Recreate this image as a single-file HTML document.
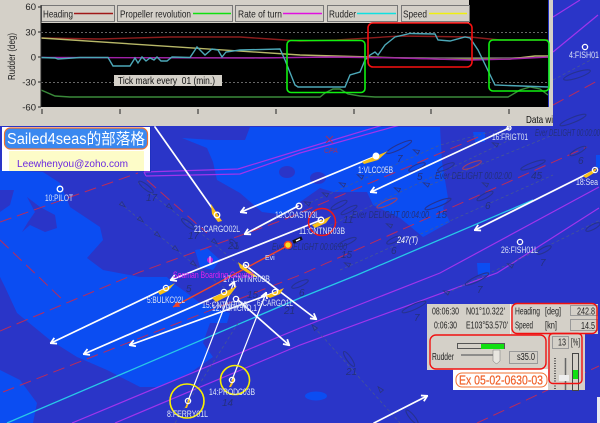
<!DOCTYPE html>
<html><head><meta charset="utf-8"><style>
html,body{margin:0;padding:0;width:600px;height:423px;overflow:hidden;background:#2a35c8}
svg{display:block;position:absolute;left:0;top:0}
text{font-family:"Liberation Sans","Noto Sans CJK TC",sans-serif}
</style></head><body>
<svg width="600" height="423" viewBox="0 0 600 423" xmlns="http://www.w3.org/2000/svg">
<defs>
<marker id="a" viewBox="0 0 10 10" refX="8.500" refY="5" markerWidth="8" markerHeight="8" markerUnits="userSpaceOnUse" orient="auto"><path d="M2 1L9 5L2 9" fill="none" stroke="#fff" stroke-width="2.200"/></marker>
<marker id="r" viewBox="0 0 10 10" refX="9" refY="5" markerWidth="8" markerHeight="8" markerUnits="userSpaceOnUse" orient="auto"><path d="M1 1L9 5L1 9Z" fill="#f04428"/></marker>
<path id="t" d="M-3-2L3 0L-3 2Z" fill="none" stroke="#2a3480" stroke-width=".8"/>
</defs>
<!-- map base -->
<rect width="600" height="423" fill="#2a35c8"/>
<g fill="#0b4df2">
<path d="M0 170L43 172L60 183L70 207L100 227L103 240L87 258L103 270L140 277L167 277L173 283L187 293L200 303L230 313L227 323L210 323L203 343L213 357L190 373L160 387L140 387L107 370L77 357L50 340L17 313L5 287L0 277Z"/>
<path d="M0 370L20 380L37 403L33 423L0 423Z"/>
<path d="M182 138L213 140L245 140L250 127L440 127L442 162L448 198L443 208L450 222L423 237L400 218L373 205L367 192L333 192L320 188L300 202L285 215L262 212L240 193L217 180L213 162L207 148Z"/>
<path d="M195 250L207 248L220 260L213 270L200 267Z"/>
<path d="M473 132L485 132L485 142L475 142Z"/>
<path d="M477 263L490 263L490 275L478 275Z"/>
<path d="M596 155L600 155V168H596Z"/>
<ellipse cx="316" cy="396" rx="11" ry="4.500"/>
</g>
<g fill="#2a35c8">
<path d="M0 190L14 190L10 205L0 212Z"/>
<path d="M27 197L40 207L55 215L57 228L45 232L30 225L22 232L28 222L35 212Z"/>
<ellipse cx="287" cy="172" rx="8" ry="6"/>
<ellipse cx="318" cy="178" rx="8" ry="6"/>
</g>
<!-- purple lines -->
<g fill="none" stroke="#a034ec" stroke-width="1.200">
<path d="M144 172L238 169L300 150L383 125"/><path d="M146 176L240 174L300 153L400 125"/>
<path d="M144 172L146 176"/>
<path d="M72 423L300 328L440 273L599 187"/><path d="M115 423L300 345L497 273L599 208"/>
<path d="M553 52L598 15"/><path d="M553 17L580 0"/>
</g>
<path d="M7 423L300 298L357 275L533 200" fill="none" stroke="#28c8e8" stroke-width="1.300"/>
<!-- red dashed -->
<g fill="none" stroke="#b82c5c" stroke-width="1" stroke-dasharray="12 6">
<path d="M3 392L300 275L587 147"/><path d="M0 331L140 272L283 220L483 135"/>
<path d="M0 222L138 173"/><path d="M147 180L207 233"/><path d="M0 240L65 302"/>
<path d="M477 423L599 366"/><path d="M553 105L599 80"/>
</g>
<!-- gray dashed tracks -->
<g fill="none" stroke="#4a5a90" stroke-width="0.700" stroke-dasharray="3 2.500">
<path d="M120 203L197 267L240 300"/><path d="M138 183L213 243L245 270"/><path d="M314 327L400 423"/>
<path d="M175 423L240 320"/><path d="M447 293L560 240L600 220"/>
<path d="M300 207L440 145L510 127"/><path d="M310 235L520 135"/><path d="M430 185L553 135"/>
<path d="M553 80L600 55"/><path d="M340 270L553 175"/>
</g>
<g>
<use href="#t" transform="translate(123 205) rotate(40)"/><use href="#t" transform="translate(141 220) rotate(40)"/><use href="#t" transform="translate(158 235) rotate(40)"/>
<use href="#t" transform="translate(176 249) rotate(40)"/><use href="#t" transform="translate(194 264) rotate(40)"/><use href="#t" transform="translate(170 207) rotate(40)"/>
<use href="#t" transform="translate(215 242) rotate(40)"/><use href="#t" transform="translate(307 203) rotate(205)"/><use href="#t" transform="translate(325 194) rotate(205)"/>
<use href="#t" transform="translate(342 184) rotate(205)"/><use href="#t" transform="translate(360 176) rotate(205)"/><use href="#t" transform="translate(416 151) rotate(205)"/>
<use href="#t" transform="translate(495 144) rotate(205)"/><use href="#t" transform="translate(397 189) rotate(205)"/><use href="#t" transform="translate(426 184) rotate(205)"/>
<use href="#t" transform="translate(485 184) rotate(205)"/><use href="#t" transform="translate(389 225) rotate(205)"/><use href="#t" transform="translate(347 264) rotate(205)"/>
<use href="#t" transform="translate(446 292) rotate(205)"/><use href="#t" transform="translate(510 265) rotate(205)"/><use href="#t" transform="translate(314 327) rotate(230)"/>
<use href="#t" transform="translate(380 389) rotate(230)"/>
</g>
<!-- ship outlines -->
<g fill="none" stroke="#263290" stroke-width="1.100">
<ellipse cx="399" cy="147" rx="14" ry="2.600" transform="rotate(-26 399 147)"/>
<ellipse cx="417" cy="167" rx="9" ry="2.400" transform="rotate(-24 417 167)"/>
<ellipse cx="446" cy="167" rx="9" ry="2.400" transform="rotate(-24 446 167)"/>
<ellipse cx="533" cy="165" rx="13" ry="2.500" transform="rotate(-20 533 165)"/>
<ellipse cx="578" cy="151" rx="9" ry="2.400" transform="rotate(-28 578 151)"/>
<ellipse cx="485" cy="196" rx="9" ry="2.400" transform="rotate(-28 485 196)"/>
<ellipse cx="438" cy="204" rx="14" ry="2.600" transform="rotate(-22 438 204)"/>
<ellipse cx="339" cy="205" rx="9" ry="2.400" transform="rotate(-28 339 205)"/>
<ellipse cx="349" cy="210" rx="9" ry="2.200" transform="rotate(-28 349 210)"/>
<ellipse cx="347" cy="242" rx="10" ry="2.400" transform="rotate(-24 347 242)"/>
<ellipse cx="394" cy="240" rx="8" ry="2.400" transform="rotate(-26 394 240)"/>
<ellipse cx="544" cy="250" rx="8" ry="2.400" transform="rotate(-28 544 250)"/>
<ellipse cx="414" cy="307" rx="13" ry="2.600" transform="rotate(-24 414 307)"/>
<ellipse cx="477" cy="279" rx="13" ry="2.600" transform="rotate(-26 477 279)"/>
<ellipse cx="300" cy="284" rx="9" ry="2.400" transform="rotate(-24 300 284)"/>
<ellipse cx="349" cy="359" rx="9" ry="2.400" transform="rotate(55 349 359)"/>
<ellipse cx="412" cy="417" rx="9" ry="2.400" transform="rotate(50 412 417)"/>
<ellipse cx="146" cy="187" rx="9" ry="2.400" transform="rotate(38 146 187)"/>
<ellipse cx="188" cy="224" rx="8" ry="2.400" transform="rotate(38 188 224)"/>
<ellipse cx="234" cy="244" rx="6" ry="2.200" transform="rotate(50 234 244)"/>
<ellipse cx="593" cy="227" rx="8" ry="2.400" transform="rotate(-28 593 227)"/>
<ellipse cx="577" cy="75" rx="14" ry="3" transform="rotate(-18 577 75)"/>
<ellipse cx="573" cy="120" rx="14" ry="2.600" transform="rotate(-22 573 120)"/>
</g>
<g fill="none" stroke="#a04060" stroke-width="1.100">
<ellipse cx="472" cy="165" rx="10" ry="2.400" transform="rotate(-22 472 165)"/>
<ellipse cx="387" cy="203" rx="11" ry="2.400" transform="rotate(-24 387 203)"/>
</g>
<path d="M326 136L333 143M333 136L326 143" stroke="#a03060"/>
<text x="324" y="153" font-size="7" fill="#a03060" font-style="italic">CPA</text>
<!-- dark italic numbers -->
<g fill="#24307c" font-size="10" font-style="italic">
<text x="146" y="201">17</text><text x="188" y="239">17</text><text x="228" y="249">21</text><text x="186" y="292">5</text>
<text x="247" y="298">15</text><text x="284" y="314">21</text><text x="346" y="375">21</text><text x="222" y="406">14</text>
<text x="414" y="321">7</text><text x="477" y="293">7</text><text x="540" y="266">7</text><text x="299" y="296">6</text>
<text x="391" y="254">6</text><text x="341" y="258">15</text><text x="436" y="218">15</text><text x="485" y="209">6</text>
<text x="417" y="180">5</text><text x="578" y="164">6</text><text x="531" y="179">45</text><text x="397" y="162">7</text><text x="343" y="223">11</text>
<text x="535" y="136" textLength="65" lengthAdjust="spacingAndGlyphs">Ever DELIGHT 00:00:00</text>
<text x="435" y="179" textLength="77" lengthAdjust="spacingAndGlyphs">Ever DELIGHT 00:02:00</text>
<text x="352" y="218" textLength="77" lengthAdjust="spacingAndGlyphs">Ever DELIGHT 00:04:00</text>
<text x="272" y="250" textLength="75" lengthAdjust="spacingAndGlyphs">Ever DELIGHT 00:06:00</text>
</g>
<text x="397" y="243" font-size="9" font-style="italic" fill="#fff" textLength="21" lengthAdjust="spacingAndGlyphs">247(T)</text>
<!-- white tracks -->
<g fill="none" stroke="#fff" stroke-width="1.700" stroke-linecap="round">
<path d="M155 127L217 215"/>
<path d="M376 156L241 212" marker-end="url(#a)"/>
<path d="M509 128L371 192" marker-end="url(#a)"/>
<path d="M298 206L245 234" marker-end="url(#a)"/>
<path d="M321 220L171 280" marker-end="url(#a)"/>
<path d="M595 170L475 230" marker-end="url(#a)"/>
<path d="M166 288L51 343" marker-end="url(#a)"/>
<path d="M224 293L84 354" marker-end="url(#a)"/>
<path d="M276 292L130 345" marker-end="url(#a)"/>
<path d="M188 401L234 282" stroke-width="1.200" marker-end="url(#a)"/>
<path d="M232 380L266 293" stroke-width="1.200" marker-end="url(#a)"/>
<path d="M238 300L289 345" marker-end="url(#a)"/>
<path d="M245 265L316 319" marker-end="url(#a)"/>
<path d="M374 423L427 396" marker-end="url(#a)"/>
</g>
<path d="M289 245L173 307" fill="none" stroke="#f04428" stroke-width="1.500" marker-end="url(#r)"/>
<!-- yellow ships -->
<g fill="#f8c018">
<path d="M362 162L388 151L378 160L364 164Z"/>
<path d="M211 204L222 221L218 222L212 214Z"/>
<path d="M238 262L258 277L254 277L240 268Z"/>
<path d="M158 292L175 283L168 291L160 295Z"/>
<path d="M212 298L237 286L230 295L216 302Z"/>
<path d="M266 296L284 288L280 294L270 298Z"/>
<path d="M312 225L331 216L326 223L315 228Z"/>
<path d="M583 176L598 167L594 173L586 178Z"/>
<path d="M185 408L189 398L190 400L187 408Z"/>
<path d="M229 387L234 376L235 380L231 387Z"/>
</g>
<circle cx="288" cy="245" r="3.500" fill="#f8e020" stroke="#f04428" stroke-width="1.500"/>
<path d="M293 242L302 238" stroke="#111" stroke-width="3.500"/><path d="M296 241L300 239" stroke="#fff" stroke-width="1.500"/>
<!-- circles -->
<g fill="none" stroke="#fff" stroke-width="1.300">
<circle cx="60" cy="189" r="2.800"/><circle cx="376" cy="156" r="2.800" fill="#fff"/><circle cx="509" cy="128" r="2"/>
<circle cx="299" cy="206" r="2.800"/><circle cx="321" cy="220" r="2.800"/><circle cx="520" cy="242" r="2.600"/>
<circle cx="595" cy="170" r="2.600"/><circle cx="585" cy="47" r="2.600"/>
<circle cx="217" cy="215" r="2.800"/><circle cx="166" cy="288" r="2.600"/><circle cx="224" cy="292" r="2.600"/>
<circle cx="236" cy="299" r="2.600"/><circle cx="275" cy="292" r="2.600"/><circle cx="246" cy="265" r="2.600"/>
<circle cx="188" cy="401" r="2.600"/><circle cx="232" cy="380" r="2.600"/>
</g>
<circle cx="187" cy="401" r="17" fill="none" stroke="#f8f000" stroke-width="1.600"/>
<circle cx="235" cy="380" r="14.500" fill="none" stroke="#f8f000" stroke-width="1.600"/>
<circle cx="322" cy="222" r="13.500" fill="none" stroke="#f01818" stroke-width="1.500"/>
<!-- map labels -->
<g fill="#dde4f6" font-size="9">
<text x="45" y="201" textLength="28" lengthAdjust="spacingAndGlyphs">10:PILOT</text>
<text x="358" y="173" textLength="35" lengthAdjust="spacingAndGlyphs">1:VLCC05B</text>
<text x="492" y="140" textLength="36" lengthAdjust="spacingAndGlyphs">16:FRIGT01</text>
<text x="576" y="185" textLength="22" lengthAdjust="spacingAndGlyphs">18:Sea</text>
<text x="569" y="58" textLength="30" lengthAdjust="spacingAndGlyphs">4:FISH01</text>
<text x="501" y="253" textLength="37" lengthAdjust="spacingAndGlyphs">26:FISH01L</text>
<text x="194" y="232" textLength="46" lengthAdjust="spacingAndGlyphs">21:CARGO02L</text>
<text x="275" y="218" textLength="44" lengthAdjust="spacingAndGlyphs">13:COAST03L</text>
<text x="299" y="234" textLength="46" lengthAdjust="spacingAndGlyphs">11:CNTNR03B</text>
<text x="223" y="282" textLength="47" lengthAdjust="spacingAndGlyphs">17:CNTNR03B</text>
<text x="147" y="303" textLength="38" lengthAdjust="spacingAndGlyphs">5:BULKC02L</text>
<text x="202" y="308" textLength="46" lengthAdjust="spacingAndGlyphs">15:CNTNR03B</text>
<text x="212" y="311" textLength="45" lengthAdjust="spacingAndGlyphs">12:VEHICND.1</text>
<text x="257" y="306" textLength="36" lengthAdjust="spacingAndGlyphs">6:CARGO1L</text>
<text x="167" y="417" textLength="41" lengthAdjust="spacingAndGlyphs">8:FERRY01L</text>
<text x="209" y="395" textLength="46" lengthAdjust="spacingAndGlyphs">14:PRODC03B</text>
</g>
<text x="173" y="278" font-size="9" fill="#e020f0" textLength="80" lengthAdjust="spacingAndGlyphs">Seaman Boarding Ground</text>
<circle cx="210" cy="260" r="3" fill="#c020e0"/><path d="M210 256v8" stroke="#fff" stroke-width=".8"/><text x="265" y="260" font-size="7" fill="#d8e0f4">Evi</text>
<!-- chart panel -->
<rect width="553" height="126" fill="#d4d0c8"/>
<rect x="41" y="23" width="508" height="84" fill="#000"/>
<rect x="469" y="0" width="80" height="23" fill="#000"/>
<path d="M548.500 0V107" stroke="#2030c0" stroke-width="1"/>
<g stroke="#666" stroke-dasharray="2 2"><path d="M41 32.500H549M41 82.500H549"/></g>
<path d="M41 57.500H549" stroke="#555"/>
<g fill="none" stroke-width="1.400">
<path d="M41 38L100 39L170 37L240 37L270 39L300 41L337 40L400 36L470 37L500 40L548 40" stroke="#8c1c1c"/>
<path d="M41 38L300 55L370 57L440 59L510 59L535 56L548 56" stroke="#b8b868"/>
<path d="M41 57.500L260 58L330 57L400 58L470 60L510 59L548 57" stroke="#a020a8"/>
<path d="M41 90L55 96L70 97L320 97L325 93L333 89L340 89L348 94L360 96L375 97L508 97L520 90L530 87L540 89L548 95" stroke="#3a8a3a"/>
<path d="M41 57.500L55 58L58 59L80 57.500L108 57.500L113 66L130 66L135 58L138 63L142 57L146 61L150 58L154 60L157 57L161 61L167 61L172 57L190 57.500L197 47L205 55L212 49L218 50L222 57L226 52L240 50L280 49L285 60L295 85L298 87L345 87L350 75L360 72L365 60L370 55L375 52L378 55L385 45L390 41L395 37L410 33.500L435 34L438 40L450 41L465 37L470 38L478 50L495 85L548 87" stroke="#4ca8b8"/>
</g>
<g fill="none" stroke-width="1.600">
<rect x="287" y="40.500" width="78" height="52" rx="4" stroke="#10f010"/>
<rect x="368" y="23" width="104" height="44" rx="5" stroke="#f81010"/>
<rect x="489" y="40" width="60" height="51" rx="4" stroke="#10f010"/>
</g>
<!-- legend -->
<g fill="#d4d0c8" stroke="#777" stroke-width="1">
<rect x="41.500" y="5.500" width="73" height="16"/><rect x="117.500" y="5.500" width="115" height="16"/>
<rect x="235.500" y="5.500" width="88" height="16"/><rect x="327.500" y="5.500" width="70" height="16"/><rect x="401.500" y="5.500" width="68" height="16"/>
</g>
<g font-size="10.500" fill="#222">
<text x="43" y="17.500" textLength="30" lengthAdjust="spacingAndGlyphs">Heading</text>
<text x="120" y="17.500" textLength="71" lengthAdjust="spacingAndGlyphs">Propeller revolution</text>
<text x="238" y="17.500" textLength="44" lengthAdjust="spacingAndGlyphs">Rate of turn</text>
<text x="329" y="17.500" textLength="27" lengthAdjust="spacingAndGlyphs">Rudder</text>
<text x="403" y="17.500" textLength="24" lengthAdjust="spacingAndGlyphs">Speed</text>
</g>
<g stroke-width="1.400"><path d="M74 13.500H113" stroke="#a01818"/><path d="M193 13.500H231" stroke="#10e010"/><path d="M283 13.500H322" stroke="#e010e0"/><path d="M357 13.500H396" stroke="#10e0e0"/><path d="M429 13.500H467" stroke="#f0f010"/></g>
<!-- axis -->
<g font-size="9.500" fill="#222" text-anchor="end">
<text x="36" y="10">60</text><text x="36" y="35.500">30</text><text x="36" y="60.500">0</text><text x="36" y="85.500">-30</text><text x="36" y="110.500">-60</text>
</g>
<path d="M38 7H41M38 32H41M38 57H41M38 82H41M38 107H41M41 5V107M42 109V114M120 109V114M198 109V114M276 109V114M354 109V114M431 109V114M509 109V114" stroke="#222" fill="none"/>
<text transform="translate(15 56.500) rotate(-90)" font-size="10.500" fill="#222" text-anchor="middle" textLength="47" lengthAdjust="spacingAndGlyphs">Rudder (deg)</text>
<rect x="114" y="75" width="108" height="11" fill="#d4d0c8"/>
<text x="118" y="84" font-size="10.500" fill="#111" textLength="97" lengthAdjust="spacingAndGlyphs">Tick mark every&#160; 01 (min.)</text>
<text x="526" y="123" font-size="10.500" fill="#111" textLength="27" lengthAdjust="spacingAndGlyphs">Data wi</text>
<!-- logo -->
<rect x="2" y="127" width="148" height="44" fill="#fff"/>
<rect x="4.500" y="128" width="143" height="21" rx="6" fill="#3a88f0" stroke="#f07030" stroke-width="1.200"/>
<text x="7" y="144" font-size="15.500" fill="#fff" textLength="138" lengthAdjust="spacingAndGlyphs">Sailed4seas的部落格</text>
<rect x="9" y="151" width="135" height="20" fill="#fdfcc8"/>
<text x="17" y="167" font-size="10.500" fill="#6a28e0" textLength="111" lengthAdjust="spacingAndGlyphs">Leewhenyou@zoho.com</text>
<path d="M150.500 127V172" stroke="#2030c0"/>
<!-- control panel -->
<rect x="427" y="304" width="171" height="30" fill="#d4d0c8"/>
<rect x="427" y="334" width="121" height="36" fill="#d4d0c8"/>
<rect x="453" y="369" width="95" height="21" fill="#fff"/>
<rect x="548" y="334" width="37" height="56" fill="#d4d0c8"/>
<path d="M510.500 304V334" stroke="#f4f4f4"/>
<g fill="none" stroke="#999">
<rect x="570.500" y="305.500" width="27" height="10"/><rect x="570.500" y="319.500" width="27" height="11"/>
<rect x="509.500" y="351.500" width="28" height="12"/><rect x="552.500" y="336.500" width="16" height="12"/>
</g>
<g font-size="10" fill="#222">
<text x="432" y="314.500" textLength="27" lengthAdjust="spacingAndGlyphs">08:06:30</text>
<text x="466" y="314.500" textLength="39" lengthAdjust="spacingAndGlyphs">N01°10.322'</text>
<text x="434" y="328.500" textLength="23" lengthAdjust="spacingAndGlyphs">0:06:30</text>
<text x="466" y="328.500" textLength="42" lengthAdjust="spacingAndGlyphs">E103°53.570'</text>
<text x="515" y="314.500" textLength="25" lengthAdjust="spacingAndGlyphs">Heading</text>
<text x="545" y="314.500" textLength="16" lengthAdjust="spacingAndGlyphs">[deg]</text>
<text x="515" y="328.500" textLength="18" lengthAdjust="spacingAndGlyphs">Speed</text>
<text x="545" y="328.500" textLength="12" lengthAdjust="spacingAndGlyphs">[kn]</text>
<text x="432" y="360" textLength="22" lengthAdjust="spacingAndGlyphs">Rudder</text>
<text x="577" y="314.500" textLength="18" lengthAdjust="spacingAndGlyphs">242.8</text>
<text x="581" y="329" textLength="14" lengthAdjust="spacingAndGlyphs">14.5</text>
<text x="517" y="360" textLength="18" lengthAdjust="spacingAndGlyphs">s35.0</text>
<text x="558" y="345.500" textLength="8" lengthAdjust="spacingAndGlyphs">13</text>
<text x="571" y="345.500" textLength="9" lengthAdjust="spacingAndGlyphs">[%]</text>
</g>
<rect x="457.500" y="343.500" width="47" height="5" fill="#d4d0c8" stroke="#555"/>
<rect x="481" y="344" width="23" height="5" fill="#10e010"/>
<path d="M461 355H495" stroke="#777" stroke-width="1.500"/>
<path d="M493 350H500V361L496.500 364L493 361Z" fill="#e8e6e0" stroke="#777" stroke-width=".5"/>
<path d="M555 358V390" stroke="#333" stroke-width="1.500" stroke-dasharray="1 1.500"/>
<path d="M565.500 358V390" stroke="#666" stroke-width="1.500"/>
<path d="M559 375H569V381H559Z" fill="#eee"/>
<rect x="572.500" y="353.500" width="6" height="37" fill="#d4d0c8" stroke="#444"/>
<rect x="573" y="370" width="5" height="9" fill="#10e010"/>
<g fill="none" stroke="#f01010" stroke-width="1.400">
<rect x="512" y="303.500" width="85" height="30" rx="5"/>
<rect x="430" y="335" width="116" height="34" rx="6"/>
<rect x="549" y="333.500" width="33" height="50" rx="4"/>
</g>
<rect x="456" y="373" width="91" height="14" rx="6" fill="#fff" stroke="#f07030"/>
<text x="459" y="384.500" font-size="12.500" fill="#f06028" stroke="#f06028" stroke-width=".2" textLength="84" lengthAdjust="spacingAndGlyphs">Ex 05-02-0630-03</text>
<rect x="597" y="397" width="3" height="26" fill="#e8e8f0"/>
</svg>
</body></html>
